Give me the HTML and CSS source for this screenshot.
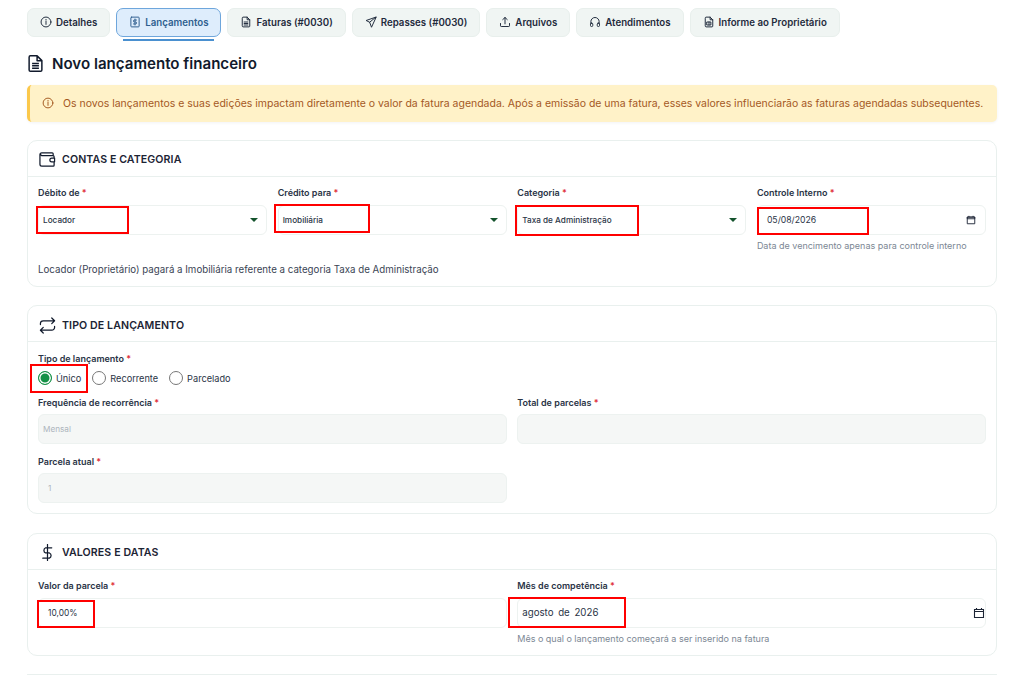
FILE: index.html
```html
<!DOCTYPE html>
<html lang="pt-BR">

<head>
    <meta charset="utf-8">
    <title>Novo lançamento financeiro</title>
    <link rel="stylesheet" href="styles.css">
</head>

<body>

    <!-- Abas -->
    <nav class="tabs">
        <a class="tab">
            <svg class="tab-icon" viewBox="0 0 16 16"><circle cx="8" cy="8" r="6.6"/><path d="M8 7.2v4M8 4.6v.9"/></svg>
            Detalhes
        </a>
        <a class="tab tab-active">
            <svg class="tab-icon" viewBox="0 0 16 16"><rect x="2.500" y="1.500" width="11" height="13" rx="1"/><path d="M10 5.400H7.200a1.300 1.300 0 0 0 0 2.600h1.600a1.300 1.300 0 0 1 0 2.600H6M8 4v8"/></svg>
            Lançamentos
        </a>
        <a class="tab">
            <svg class="tab-icon" viewBox="0 0 16 16"><path d="M3 2.500A1 1 0 0 1 4 1.500h5.500L13 5v8.500a1 1 0 0 1-1 1H4a1 1 0 0 1-1-1zM9.500 1.500V5H13M5.500 8h5M5.500 10h5M5.500 12h5"/></svg>
            Faturas (#0030)
        </a>
        <a class="tab">
            <svg class="tab-icon" viewBox="0 0 16 16"><path d="M14.500 1.500 1.500 6l4.700 2.300L8.500 14.500zM14.500 1.500 6.200 8.300"/></svg>
            Repasses (#0030)
        </a>
        <a class="tab">
            <svg class="tab-icon" viewBox="0 0 16 16"><path d="M2 10v3a1 1 0 0 0 1 1h10a1 1 0 0 0 1-1v-3M8 10.500V2M5 4.800 8 2l3 2.800"/></svg>
            Arquivos
        </a>
        <a class="tab">
            <svg class="tab-icon" viewBox="0 0 16 16"><path d="M2.500 10V7.500a5.500 5.500 0 0 1 11 0V10"/><rect x="2" y="9.500" width="3" height="4.500" rx="1.300"/><rect x="11" y="9.500" width="3" height="4.500" rx="1.300"/></svg>
            Atendimentos
        </a>
        <a class="tab">
            <svg class="tab-icon" viewBox="0 0 16 16"><path d="M3 2.500A1 1 0 0 1 4 1.500h5.500L13 5v8.500a1 1 0 0 1-1 1H4a1 1 0 0 1-1-1zM9.500 1.500V5H13M5.500 8h5v4h-5zM8 8v4"/></svg>
            Informe ao Proprietário
        </a>
    </nav>

    <h1 class="page-title">
        <svg class="title-icon" viewBox="0 0 14 16"><path d="M1 2A1.200 1.200 0 0 1 2.200 .8h6.300L13 5.300v8.700a1.200 1.200 0 0 1-1.200 1.200H2.200A1.200 1.200 0 0 1 1 14zM8.500 .8v4.500H13M3.800 8h6.400M3.800 10.200h6.400M3.800 12.400h6.400"/></svg>
        Novo lançamento financeiro
    </h1>

    <div class="alert">
        <svg class="alert-icon" viewBox="0 0 16 16"><circle cx="8" cy="8" r="6.500"/><path d="M8 7.200v4M8 4.600v.9"/></svg>
        Os novos lançamentos e suas edições impactam diretamente o valor da fatura agendada. Após a emissão de uma fatura, esses valores influenciarão as faturas agendadas subsequentes.
    </div>

    <!-- Contas e categoria -->
    <section class="card">
        <header class="card-header">
            <svg class="card-icon" viewBox="0 0 18 18"><path d="M15 5V3a1 1 0 0 0-1-1H3a2 2 0 0 0-2 2v10a2 2 0 0 0 2 2h12a1 1 0 0 0 1-1v-2.500M1.200 3.500 3 5h12a1 1 0 0 1 1 1v1.500M16.500 7.500h-3a2 2 0 0 0 0 4h3z"/></svg>
            CONTAS E CATEGORIA
        </header>
        <div class="card-body card-body-contas">
            <div class="grid-4">
                <div class="field">
                    <label class="field-label">Débito de <span class="req">*</span></label>
                    <div class="input">
                        <span class="value">Locador</span>
                        <span class="caret"></span>
                        <span class="mark mark-debito"></span>
                    </div>
                </div>
                <div class="field">
                    <label class="field-label">Crédito para <span class="req">*</span></label>
                    <div class="input">
                        <span class="value">Imobiliária</span>
                        <span class="caret"></span>
                        <span class="mark mark-credito"></span>
                    </div>
                </div>
                <div class="field">
                    <label class="field-label">Categoria <span class="req">*</span></label>
                    <div class="input">
                        <span class="value">Taxa de Administração</span>
                        <span class="caret"></span>
                        <span class="mark mark-categoria"></span>
                    </div>
                </div>
                <div class="field">
                    <label class="field-label">Controle Interno <span class="req">*</span></label>
                    <div class="input input-date">
                        <span class="value value-date">05/08/2026</span>
                        <svg class="calendar" viewBox="0 0 12 12"><path d="M1.500 2.500h9v8h-9zM1.500 2.500h9v2h-9zM3.500 1v1.500M8.500 1v1.500"/></svg>
                        <span class="mark mark-controle"></span>
                    </div>
                    <p class="help">Data de vencimento apenas para controle interno</p>
                </div>
            </div>
            <p class="summary">Locador (Proprietário) pagará a Imobiliária referente a categoria Taxa de Administração</p>
        </div>
    </section>

    <!-- Tipo de lançamento -->
    <section class="card">
        <header class="card-header">
            <svg class="card-icon" viewBox="0 0 18 18"><path d="M1.500 8V7a3 3 0 0 1 3-3h12M13.500 1l3 3-3 3M16.500 10v1a3 3 0 0 1-3 3h-12M4.500 17l-3-3 3-3"/></svg>
            TIPO DE LANÇAMENTO
        </header>
        <div class="card-body">
            <label class="field-label">Tipo de lançamento <span class="req">*</span></label>
            <div class="radios">
                <span class="radio-item"><span class="radio radio-on"></span>Único</span>
                <span class="radio-item"><span class="radio"></span>Recorrente</span>
                <span class="radio-item"><span class="radio"></span>Parcelado</span>
                <span class="mark mark-unico"></span>
            </div>
            <div class="grid-2">
                <div class="field">
                    <label class="field-label">Frequência de recorrência <span class="req">*</span></label>
                    <div class="input input-off"><span class="value">Mensal</span></div>
                </div>
                <div class="field">
                    <label class="field-label">Total de parcelas <span class="req">*</span></label>
                    <div class="input input-off"></div>
                </div>
                <div class="field">
                    <label class="field-label">Parcela atual <span class="req">*</span></label>
                    <div class="input input-off input-date"><span class="value">1</span></div>
                </div>
            </div>
        </div>
    </section>

    <!-- Valores e datas -->
    <section class="card">
        <header class="card-header">
            <svg class="card-icon" viewBox="0 0 18 18"><path d="M9 .5v17M13.500 4H7a3 3 0 0 0 0 5.500h4a3 3 0 0 1 0 5.500H4"/></svg>
            VALORES E DATAS
        </header>
        <div class="card-body card-body-valores">
            <div class="grid-2">
                <div class="field">
                    <label class="field-label">Valor da parcela <span class="req">*</span></label>
                    <div class="input input-date">
                        <span class="value value-money">10,00%</span>
                        <span class="mark mark-valor"></span>
                    </div>
                </div>
                <div class="field">
                    <label class="field-label">Mês de competência <span class="req">*</span></label>
                    <div class="input">
                        <span class="value value-month">agosto de 2026</span>
                        <svg class="calendar calendar-big" viewBox="0 0 12 12"><path d="M1.500 2.500h9v8h-9zM1.500 2.500h9v2h-9zM3.500 1v1.500M8.500 1v1.500"/></svg>
                        <span class="mark mark-mes"></span>
                    </div>
                    <p class="help">Mês o qual o lançamento começará a ser inserido na fatura</p>
                </div>
            </div>
        </div>
    </section>

    <section class="card card-next"></section>

</body>

</html>
```

FILE: styles.css
```css
body {
    box-sizing: border-box;
    height: 676px;
    margin: 0;
    padding: 8px 27px 0;
    background: #fff;
    color: #1c2434;
    font-family: Inter, "Liberation Sans", sans-serif;
    font-size: 10px;
}

/* Abas */
.tabs {
    display: flex;
    gap: 6px;
}

.tab {
    position: relative;
    display: flex;
    align-items: center;
    justify-content: center;
    gap: 4px;
    box-sizing: border-box;
    height: 28.500px;
    padding: 0 12px;
    background: #f0f5f3;
    border: 1px solid #e8efec;
    border-radius: 7px;
    color: #1f2a3c;
    font-size: 9.700px;
    font-weight: 600;
}

.tab-active {
    background: #deedfc;
    border-color: #6ea6dc;
    color: #2f5f8f;
}

.tab-active::after {
    content: "";
    position: absolute;
    left: 6px;
    right: 6px;
    bottom: -5px;
    height: 1.500px;
    background: #4a90d0;
}

.tab-icon {
    width: 12px;
    height: 12px;
    flex: none;
    fill: none;
    stroke: currentColor;
    stroke-width: 1.300;
    stroke-linecap: round;
    stroke-linejoin: round;
}

/* Título */
.page-title {
    display: flex;
    align-items: center;
    gap: 9px;
    height: 20px;
    margin: 16.500px 0 0;
    padding-left: 1px;
    color: #111a2c;
    font-size: 15.100px;
    font-weight: 600;
}

.title-icon {
    width: 15px;
    height: 17px;
    fill: none;
    stroke: #111a2c;
    stroke-width: 1.400;
    stroke-linejoin: round;
}

/* Aviso */
.alert {
    display: flex;
    align-items: center;
    gap: 9px;
    box-sizing: border-box;
    height: 36.500px;
    margin-top: 12px;
    padding-left: 12px;
    background: #fff2c8;
    border-left: 3px solid #fbc84b;
    border-radius: 5px;
    box-shadow: 0 1px 3px rgba(30, 50, 80, 0.06);
    color: #a4581f;
    font-size: 10.480px;
    white-space: nowrap;
}

.alert-icon {
    width: 12px;
    height: 12px;
    flex: none;
    fill: none;
    stroke: #a4581f;
    stroke-width: 1.300;
    stroke-linecap: round;
}

/* Cartões */
.card {
    margin-top: 18.500px;
    background: #fff;
    border: 1px solid #e9f0ee;
    border-radius: 10px;
}

.alert + .card {
    margin-top: 18px;
}

.card-next {
    height: 0;
    border-bottom: 0;
    border-radius: 10px 10px 0 0;
}

.card-header {
    display: flex;
    align-items: center;
    gap: 6px;
    box-sizing: border-box;
    height: 36px;
    padding: 3.500px 0 0 11px;
    border-bottom: 1px solid #e9f0ee;
    color: #1c2434;
    font-size: 10.600px;
    font-weight: 600;
    letter-spacing: 0.100px;
}

.card-icon {
    width: 17px;
    height: 17px;
    flex: none;
    fill: none;
    stroke: #111a2c;
    stroke-width: 1.300;
    stroke-linecap: round;
    stroke-linejoin: round;
}

.card-body {
    padding: 10.500px 10px 10px;
}

.card-body-contas,
.card-body-valores {
    padding-bottom: 9.500px;
}

.grid-4 {
    display: grid;
    grid-template-columns: repeat(4, 1fr);
    gap: 10.500px;
}

.grid-2 {
    display: grid;
    grid-template-columns: repeat(2, 1fr);
    gap: 11.500px 10.500px;
}

/* Campos */
.field-label {
    display: block;
    height: 12px;
    margin-bottom: 5.500px;
    color: #2a3446;
    font-size: 9px;
    font-weight: 600;
    line-height: 12px;
}

.req {
    color: #e0303a;
}

.input {
    position: relative;
    display: flex;
    align-items: center;
    justify-content: space-between;
    box-sizing: border-box;
    height: 30px;
    padding: 0 4px;
    background: #fff;
    border: 1px solid #edf2f0;
    border-radius: 6px;
}

.input-date {
    padding-left: 9px;
}

.input-off {
    background: #f5f7f6;
}

.value {
    color: #2a3446;
    font-size: 8.200px;
    font-weight: 500;
}

.input-off .value {
    color: #adb5bd;
    font-weight: 400;
}

.value-date {
    font-size: 8.700px;
    font-weight: 400;
}

.value-money {
    font-size: 8.400px;
    font-weight: 400;
}

.value-month {
    font-size: 9.700px;
    font-weight: 400;
    word-spacing: 2px;
}

.caret {
    width: 0;
    height: 0;
    margin-right: 4px;
    border-left: 4px solid transparent;
    border-right: 4px solid transparent;
    border-top: 4px solid #14532d;
}

.calendar {
    width: 10px;
    height: 10px;
    margin-right: 5px;
    fill: none;
    stroke: #1c2434;
    stroke-width: 1.100;
}

.calendar-big {
    width: 12px;
    height: 12px;
    margin-right: -4px;
}

.help {
    margin: 5.500px 0 0;
    color: #7c8794;
    font-size: 9px;
    line-height: 12px;
}

.summary {
    margin: 12px 0 0;
    color: #3a4454;
    font-size: 9.730px;
    line-height: 12px;
}

/* Radios */
.radios {
    position: relative;
    display: flex;
    align-items: center;
    gap: 11px;
    height: 18px;
    margin: -1px 0 9.500px;
}

.radio-item {
    display: flex;
    align-items: center;
    gap: 4px;
    color: #2a3446;
    font-size: 9.200px;
}

.radio {
    box-sizing: border-box;
    width: 14px;
    height: 14px;
    background: #fff;
    border: 1px solid #777;
    border-radius: 50%;
}

.radio-on {
    background: #149146;
    border-color: #149146;
    box-shadow: inset 0 0 0 1.500px #fff;
}

/* Marcações vermelhas por cima do print */
.mark {
    position: absolute;
    box-sizing: border-box;
    border: 2px solid #f00;
    pointer-events: none;
}

.mark-debito {
    left: -3px;
    top: 0.500px;
    width: 93px;
    height: 27.500px;
}

.mark-credito {
    left: -5px;
    top: -2px;
    width: 96px;
    height: 29px;
}

.mark-categoria {
    left: -3px;
    top: -1px;
    width: 124px;
    height: 31px;
}

.mark-controle {
    left: -1px;
    top: 1.500px;
    width: 112px;
    height: 27.500px;
}

.mark-unico {
    left: -8px;
    top: -5px;
    width: 58px;
    height: 29px;
}

.mark-valor {
    left: -2px;
    top: 1.500px;
    width: 58px;
    height: 28px;
}

.mark-mes {
    left: -10px;
    top: -1.500px;
    width: 118px;
    height: 31px;
}
```
